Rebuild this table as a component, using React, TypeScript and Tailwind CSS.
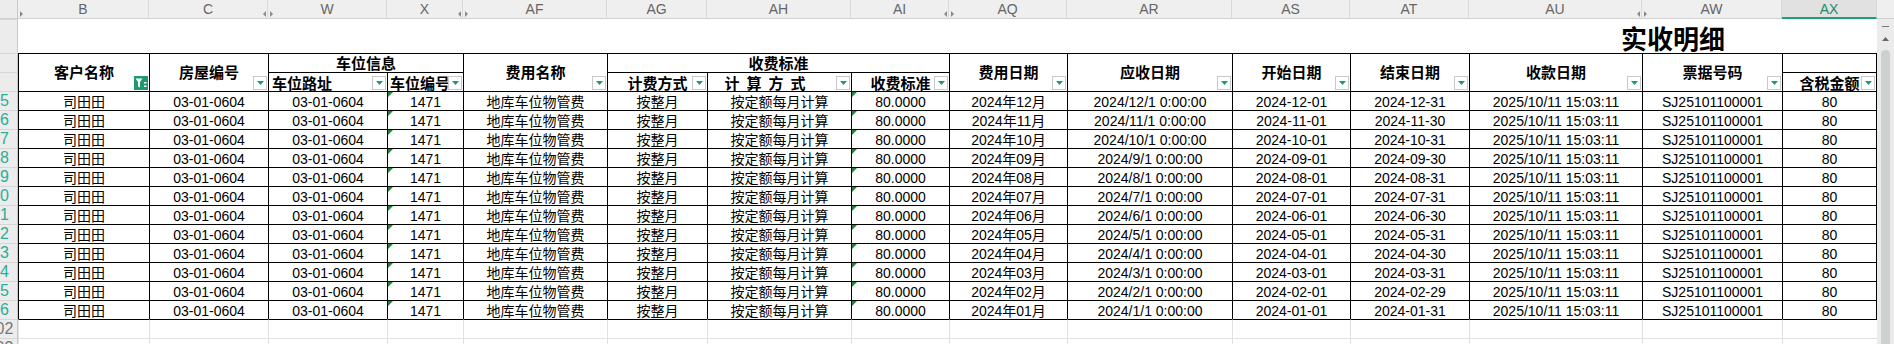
import React from 'react';

const cols = ['B', 'C', 'W', 'X', 'AF', 'AG', 'AH', 'AI', 'AQ', 'AR', 'AS', 'AT', 'AU', 'AW', 'AX'];
const markerBefore = new Set(['W', 'AF', 'AQ', 'AW']);

const months = [12, 11, 10, 9, 8, 7, 6, 5, 4, 3, 2, 1];
const ends: Record<number, string> = { 12: '31', 11: '30', 10: '31', 9: '30', 8: '31', 7: '31', 6: '30', 5: '31', 4: '30', 3: '31', 2: '29', 1: '31' };
const pad = (n: number) => n.toString().padStart(2, '0');

function rowData(m: number) {
  return [
    '司田田',
    '03-01-0604',
    '03-01-0604',
    '1471',
    '地库车位物管费',
    '按整月',
    '按定额每月计算',
    '80.0000',
    `2024年${pad(m)}月`,
    `2024/${m}/1 0:00:00`,
    `2024-${pad(m)}-01`,
    `2024-${pad(m)}-${ends[m]}`,
    '2025/10/11 15:03:11',
    'SJ25101100001',
    '80',
  ];
}

const GRID = 'grid grid-cols-[18px_131px_119px_119px_76px_144px_100px_144px_98px_118px_165px_118px_119px_173px_140px_95px]';

function FilterBtn({ active = false }: { active?: boolean }) {
  if (active) {
    return (
      <div className="absolute right-[1px] bottom-[1px] w-[14px] h-[14px] bg-[#1f9a6c] flex items-center justify-center">
        <svg width="12" height="10" viewBox="0 0 12 10">
          <path d="M0.5 0.5 H7.5 L5 4 V9.5 L3 8.5 V4 Z" fill="#fff" />
          <rect x="9" y="4" width="2.5" height="1.5" fill="#fff" />
          <rect x="9" y="7.5" width="2.5" height="1.5" fill="#fff" />
        </svg>
      </div>
    );
  }
  return (
    <div className="absolute right-[1px] bottom-[1px] w-[14px] h-[14px] bg-white border border-[#c9c9c9] flex items-center justify-center">
      <svg width="7" height="4" viewBox="0 0 7 4">
        <path d="M0 0 H7 L3.5 4 Z" fill="#1f9a6c" />
      </svg>
    </div>
  );
}

function RowHead({ num, table = false, h = '' }: { num?: string; table?: boolean; h?: string }) {
  return (
    <div className={`flex overflow-hidden bg-[#ececec] border-t border-t-[#d6d6d6] border-r border-r-[#c9c9c9] ${h}`}>
      {num && (
        <span className={`ml-[-18px] w-[36px] shrink-0 text-center text-[16px] leading-[18px] ${table ? 'text-[#2aae98]' : 'text-[#777]'}`}>
          {num}
        </span>
      )}
    </div>
  );
}

function HCell({
  children,
  className = '',
  filter,
  active,
}: {
  children?: React.ReactNode;
  className?: string;
  filter?: boolean;
  active?: boolean;
}) {
  return (
    <div className={`relative flex items-center overflow-hidden whitespace-nowrap border-t border-l border-black font-bold text-[15px] leading-none text-black ${className}`}>
      {children}
      {filter && <FilterBtn active={active} />}
    </div>
  );
}

function DCell({ children, mark, last }: { children: React.ReactNode; mark?: boolean; last?: boolean }) {
  return (
    <div className={`relative flex items-center justify-center overflow-hidden whitespace-nowrap border-t border-l border-black text-[14px] leading-none text-black pt-[2px] ${last ? 'border-r' : ''}`}>
      {mark && <div className="absolute top-0 left-0 w-0 h-0 border-t-[5px] border-t-[#22863a] border-r-[5px] border-r-transparent" />}
      {children}
    </div>
  );
}

function Marker({ single }: { single?: boolean }) {
  return (
    <svg className="absolute left-[-6px] top-[11px] z-10" width="12" height="6" viewBox="0 0 12 6">
      {!single && <path d="M4 0 L1 3 L4 6 Z" fill="#8a8a8a" />}
      <path d="M8 0 L11 3 L8 6 Z" fill="#8a8a8a" />
    </svg>
  );
}

export default function App() {
  const rowNums = ['85', '86', '87', '88', '89', '90', '91', '92', '93', '94', '95', '96'];
  return (
    <div className="w-[1894px] h-[344px] overflow-hidden bg-white flex flex-col font-['Liberation_Sans','Noto_Sans_CJK_SC',sans-serif]">
      {/* column letters */}
      <div className="grid grid-cols-[18px_131px_119px_119px_76px_144px_100px_144px_98px_118px_165px_118px_119px_173px_140px_95px_17px] h-[19px] shrink-0">
        <div className="bg-[#ececec] border-r border-r-[#c9c9c9] border-b border-b-[#d0d0d0]" />
        {cols.map((c) => {
          const isAX = c === 'AX';
          return (
            <div
              key={c}
              className={`relative flex items-center justify-center text-[14px] leading-none border-r border-r-[#d9d9d9] ${
                isAX ? 'bg-[#e1e1e1] text-[#1b8c6c] border-b-2 border-b-[#20a070]' : 'bg-[#efefef] text-[#666] border-b border-b-[#d0d0d0]'
              }`}
            >
              {c === 'B' && <Marker single />}
              {markerBefore.has(c) && <Marker />}
              {c}
            </div>
          );
        })}
        <div className="bg-[#efefef] border-b border-b-[#d0d0d0]" />
      </div>

      <div className="flex flex-1 min-h-0">
        <div className={`${GRID} grid-rows-[34px] auto-rows-[19px] w-[1877px] shrink-0`}>
          {/* title row */}
          <RowHead />
          <div className="col-span-12" />
          <div className="col-span-3 flex items-center justify-center pt-[4px] font-bold text-[26px] leading-none text-black font-['Noto_Sans_CJK_SC',sans-serif]">
            实收明细
          </div>

          {/* header row 1 */}
          <RowHead table />
          <HCell className="row-span-2 justify-center" filter active>客户名称</HCell>
          <HCell className="row-span-2 justify-center" filter>房屋编号</HCell>
          <HCell className="col-span-2 justify-center">车位信息</HCell>
          <HCell className="row-span-2 justify-center" filter>费用名称</HCell>
          <HCell className="col-span-3 justify-center">收费标准</HCell>
          <HCell className="row-span-2 justify-center" filter>费用日期</HCell>
          <HCell className="row-span-2 justify-center" filter>应收日期</HCell>
          <HCell className="row-span-2 justify-center" filter>开始日期</HCell>
          <HCell className="row-span-2 justify-center" filter>结束日期</HCell>
          <HCell className="row-span-2 justify-center" filter>收款日期</HCell>
          <HCell className="row-span-2 justify-center" filter>票据号码</HCell>
          <HCell className="border-r" />

          {/* header row 2 */}
          <RowHead table />
          <HCell className="pl-[3px] pt-[2px]" filter>车位路址</HCell>
          <HCell className="pl-[2px] pt-[2px]" filter>车位编号</HCell>
          <HCell className="justify-center pt-[2px]" filter>计费方式</HCell>
          <HCell className="justify-center pr-[22px] pt-[2px] tracking-[7px]" filter>计算方式</HCell>
          <HCell className="justify-center pt-[2px]" filter>收费标准</HCell>
          <HCell className="justify-center border-r pt-[2px]" filter>含税金额</HCell>

          {/* data rows */}
          {months.map((m, i) => (
            <React.Fragment key={m}>
              <RowHead num={rowNums[i]} table />
              {rowData(m).map((v, j) => (
                <DCell key={j} mark={j === 3 || j === 7} last={j === 14}>
                  {v}
                </DCell>
              ))}
            </React.Fragment>
          ))}

          {/* empty rows */}
          <RowHead num="102" />
          {cols.map((c) => (
            <div key={'e1' + c} className="border-t border-t-black border-l border-l-[#e1e1e1]" />
          ))}
          <RowHead num="103" />
          {cols.map((c) => (
            <div key={'e2' + c} className="border-t border-t-[#e1e1e1] border-l border-l-[#e1e1e1]" />
          ))}
        </div>

        {/* vertical scrollbar */}
        <div className="w-[17px] bg-[#ebebeb] flex flex-col items-center">
          <div className="mt-[7px] w-[7px] h-[1px] bg-[#7a7a7a]" />
          <svg className="mt-[10px]" width="7" height="4" viewBox="0 0 7 4">
            <path d="M0 4 L3.5 0 L7 4 Z" fill="#666" />
          </svg>
          <div className="mt-[9px] w-[9px] flex-1 rounded-t-[4px] bg-[#cbd1d1]" />
        </div>
      </div>
    </div>
  );
}
